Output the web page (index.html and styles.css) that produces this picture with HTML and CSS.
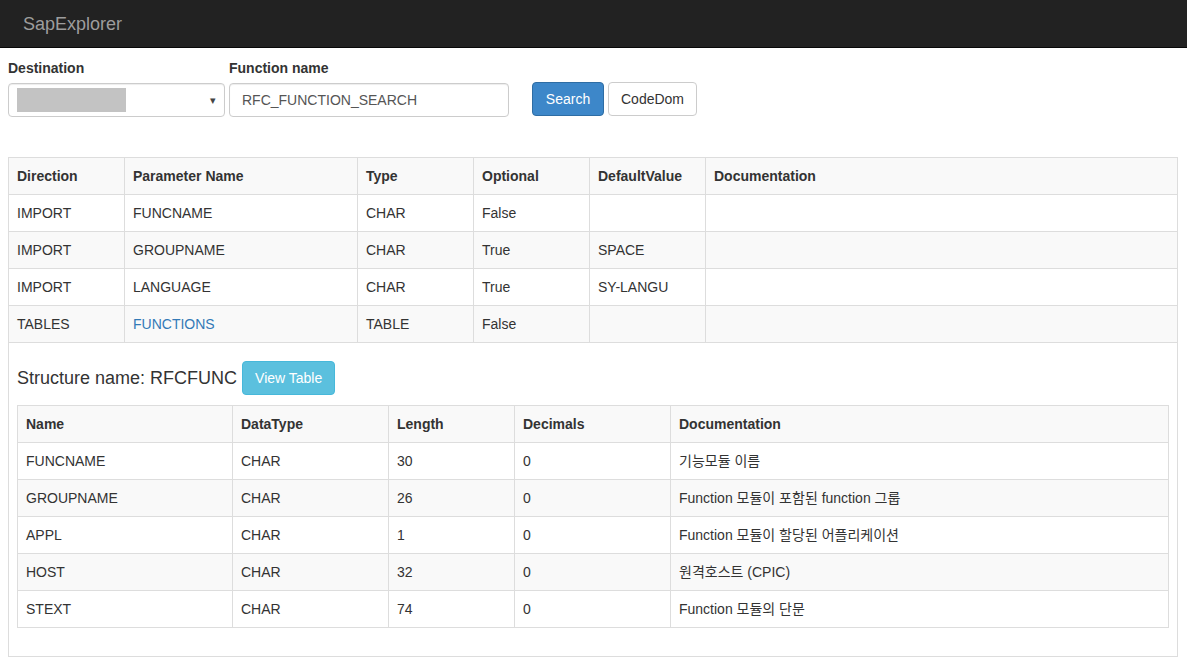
FILE: index.html
```html
<!DOCTYPE html>
<html>
<head>
<meta charset="utf-8">
<title>SapExplorer</title>
<link rel="stylesheet" href="styles.css">
</head>
<body>
<nav class="navbar"><span class="brand">SapExplorer</span></nav>
<main class="page">
  <form class="search-form">
    <div class="group group-dest">
      <label class="label">Destination</label>
      <div class="form-control select-box"><span class="redacted"></span><span class="caret">&#9662;</span></div>
    </div>
    <div class="group group-func">
      <label class="label">Function name</label>
      <div class="form-control">RFC_FUNCTION_SEARCH</div>
    </div>
    <div class="buttons">
      <button type="button" class="btn btn-primary">Search</button>
      <button type="button" class="btn btn-default">CodeDom</button>
    </div>
  </form>

  <table class="table outer">
    <colgroup><col style="width:116px"><col style="width:233px"><col style="width:116px"><col style="width:116px"><col style="width:116px"><col></colgroup>
    <tbody>
      <tr><th>Direction</th><th>Parameter Name</th><th>Type</th><th>Optional</th><th>DefaultValue</th><th>Documentation</th></tr>
      <tr><td>IMPORT</td><td>FUNCNAME</td><td>CHAR</td><td>False</td><td></td><td></td></tr>
      <tr><td>IMPORT</td><td>GROUPNAME</td><td>CHAR</td><td>True</td><td>SPACE</td><td></td></tr>
      <tr><td>IMPORT</td><td>LANGUAGE</td><td>CHAR</td><td>True</td><td>SY-LANGU</td><td></td></tr>
      <tr><td>TABLES</td><td><a class="link" href="#">FUNCTIONS</a></td><td>TABLE</td><td>False</td><td></td><td></td></tr>
      <tr class="detail-row">
        <td colspan="6">
          <h4 class="struct-title">Structure name: RFCFUNC <button type="button" class="btn btn-info">View Table</button></h4>
          <table class="table inner">
            <colgroup><col style="width:215px"><col style="width:156px"><col style="width:126px"><col style="width:156px"><col></colgroup>
            <tbody>
              <tr><th>Name</th><th>DataType</th><th>Length</th><th>Decimals</th><th>Documentation</th></tr>
              <tr><td>FUNCNAME</td><td>CHAR</td><td>30</td><td>0</td><td>기능모듈 이름</td></tr>
              <tr><td>GROUPNAME</td><td>CHAR</td><td>26</td><td>0</td><td>Function 모듈이 포함된 function 그룹</td></tr>
              <tr><td>APPL</td><td>CHAR</td><td>1</td><td>0</td><td>Function 모듈이 할당된 어플리케이션</td></tr>
              <tr><td>HOST</td><td>CHAR</td><td>32</td><td>0</td><td>원격호스트 (CPIC)</td></tr>
              <tr><td>STEXT</td><td>CHAR</td><td>74</td><td>0</td><td>Function 모듈의 단문</td></tr>
            </tbody>
          </table>
        </td>
      </tr>
    </tbody>
  </table>
</main>
</body>
</html>
```

FILE: styles.css
```css
* { box-sizing: border-box; }
html, body { margin: 0; padding: 0; }
body {
  font-family: "Liberation Sans", Arial, "Noto Sans CJK KR", sans-serif;
  font-size: 14px;
  line-height: 20px;
  color: #333;
  background: #fff;
}
.navbar {
  height: 48px;
  background: #222;
  border-bottom: 1px solid #080808;
  display: flex;
  align-items: center;
  padding-left: 23px;
}
.brand {
  color: #9d9d9d;
  font-size: 18px;
  line-height: 20px;
}
.page { padding: 10px 9px 0 8px; }
.search-form {
  display: flex;
  align-items: flex-end;
  gap: 4px;
}
.group { display: flex; flex-direction: column; }
.group-dest { width: 217px; }
.group-func { width: 280px; }
.label {
  font-weight: bold;
  margin-bottom: 5px;
  line-height: 20px;
}
.form-control {
  height: 34px;
  border: 1px solid #ccc;
  border-radius: 4px;
  padding: 6px 12px;
  line-height: 20px;
  color: #555;
  box-shadow: inset 0 1px 1px rgba(0,0,0,.075);
  background: #fff;
}
.select-box {
  display: flex;
  align-items: center;
  justify-content: space-between;
  padding: 4px 8px 4px 8px;
}
.redacted {
  width: 109px;
  height: 24px;
  background: #c3c3c3;
}
.caret { font-size: 11px; color: #444; }
.buttons {
  display: flex;
  gap: 4px;
  margin-left: 19px;
  margin-bottom: 1px;
}
.btn {
  font-family: inherit;
  font-size: 14px;
  line-height: 20px;
  padding: 6px 12px;
  border: 1px solid transparent;
  border-radius: 4px;
  cursor: pointer;
  height: 34px;
}
.btn-primary { background: #3d87c9; border-color: #2e6da4; color: #fff; width: 72px; }
.btn-default { background: #fff; border-color: #ccc; color: #333; width: 89px; }
.btn-info { background: #5bc0de; border-color: #46b8da; color: #fff; }
.table {
  width: 100%;
  border-collapse: collapse;
  table-layout: fixed;
  border: 1px solid #ddd;
}
.table th, .table td {
  border: 1px solid #ddd;
  padding: 8px;
  text-align: left;
  vertical-align: top;
  line-height: 20px;
  height: 37px;
}
.table th { font-weight: bold; }
.table > tbody > tr:nth-child(odd) > th,
.table > tbody > tr:nth-child(odd) > td { background: #f9f9f9; }
.table > tbody > tr.detail-row > td { background: #fff; }
.outer { margin-top: 40px; }
.link { color: #337ab7; text-decoration: none; }
.struct-title {
  font-size: 18px;
  font-weight: normal;
  margin: 10px 0 10px;
  line-height: 34px;
  display: flex;
  align-items: center;
  gap: 5px;
}
.inner { margin-bottom: 20px; }
```
